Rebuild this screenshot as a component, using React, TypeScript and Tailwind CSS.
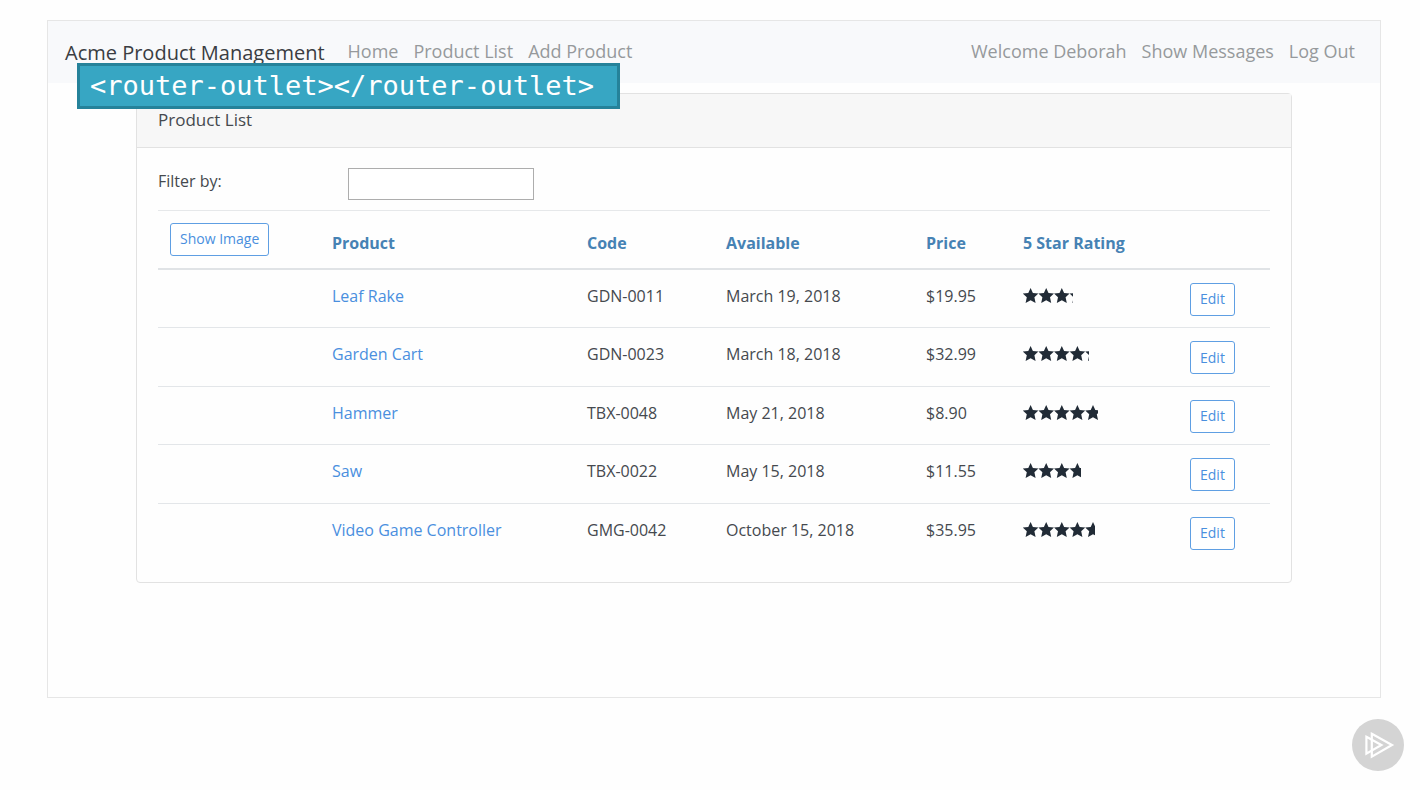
type Product = {
  name: string;
  code: string;
  available: string;
  price: string;
  rating: number;
};

const products: Product[] = [
  { name: "Leaf Rake", code: "GDN-0011", available: "March 19, 2018", price: "$19.95", rating: 3.2 },
  { name: "Garden Cart", code: "GDN-0023", available: "March 18, 2018", price: "$32.99", rating: 4.2 },
  { name: "Hammer", code: "TBX-0048", available: "May 21, 2018", price: "$8.90", rating: 4.8 },
  { name: "Saw", code: "TBX-0022", available: "May 15, 2018", price: "$11.55", rating: 3.7 },
  { name: "Video Game Controller", code: "GMG-0042", available: "October 15, 2018", price: "$35.95", rating: 4.6 },
];

const STAR_WIDTH = 78;

function Stars({ rating }: { rating: number }) {
  return (
    <div
      className="mt-1 h-4 overflow-hidden"
      role="img"
      aria-label={`${rating} of 5 stars`}
      style={{ width: Math.round((rating * STAR_WIDTH) / 5) }}
    >
      <svg width={STAR_WIDTH} height="16" viewBox="0 0 78 16" fill="#212b36">
        {[0, 1, 2, 3, 4].map((i) => (
          <path
            key={i}
            transform={`translate(${i * 15.6} 0)`}
            d="M7.6 0 L9.9 5 L15.4 5.5 L11.4 9.3 L12.6 15 L7.6 12.2 L2.6 15 L3.8 9.3 L-0.2 5.5 L5.3 5 Z"
          />
        ))}
      </svg>
    </div>
  );
}

function NavBar() {
  return (
    <nav className="flex h-[62px] items-center bg-[#f8f9fb] pr-[25px] pl-[17px]">
      <a href="#" className="mr-[23px] pt-0.5 text-[20px] leading-[30px] text-[#3a3d42]">
        Acme Product Management
      </a>
      <div className="flex flex-1 gap-[15px] pb-0.5 text-[18px] leading-[28px] text-[#96999c]">
        <a href="#home">Home</a>
        <a href="#products">Product List</a>
        <a href="#add">Add Product</a>
      </div>
      <div className="flex gap-[15px] pb-0.5 text-[18px] leading-[28px] text-[#96999c]">
        <span>Welcome Deborah</span>
        <a href="#messages">Show Messages</a>
        <a href="#logout">Log Out</a>
      </div>
    </nav>
  );
}

function OutlineButton({ children }: { children: string }) {
  return (
    <button
      type="button"
      className="h-[33px] rounded-[3px] border border-[#5f9fe3] bg-white px-[9px] text-[14px] leading-[20px] whitespace-nowrap text-[#4a8fde]"
    >
      {children}
    </button>
  );
}

function ProductTable() {
  return (
    <table className="h-[351px] w-full table-fixed border-collapse text-left text-[16px] leading-[24px]">
      <colgroup>
        <col className="w-[162px]" />
        <col className="w-[255px]" />
        <col className="w-[139px]" />
        <col className="w-[200px]" />
        <col className="w-[97px]" />
        <col className="w-[167px]" />
        <col />
      </colgroup>
      <thead>
        <tr className="h-[58px] border-t border-b-2 border-t-[#e6e8ea] border-b-[#e0e3e6] text-[#4682b4]">
          <th className="px-3 align-middle font-normal">
            <OutlineButton>Show Image</OutlineButton>
          </th>
          <th className="px-3 pt-2 font-bold">Product</th>
          <th className="px-3 pt-2 font-bold">Code</th>
          <th className="px-3 pt-2 font-bold">Available</th>
          <th className="px-3 pt-2 font-bold">Price</th>
          <th className="px-3 pt-2 font-bold">5 Star Rating</th>
          <th />
        </tr>
      </thead>
      <tbody>
        {products.map((p) => (
          <tr key={p.code} className="border-b border-[#e3e6e9] align-top last:border-b-0">
            <td />
            <td className="px-3 pt-[14px]">
              <a href={`#${p.code}`} className="text-[#4a8fde]">
                {p.name}
              </a>
            </td>
            <td className="px-3 pt-[14px]">{p.code}</td>
            <td className="px-3 pt-[14px]">{p.available}</td>
            <td className="px-3 pt-[14px]">{p.price}</td>
            <td className="px-3 pt-[14px]">
              <Stars rating={p.rating} />
            </td>
            <td className="px-3 pt-[13px]">
              <OutlineButton>Edit</OutlineButton>
            </td>
          </tr>
        ))}
      </tbody>
    </table>
  );
}

function PlayBadge() {
  return (
    <svg width="52" height="52" viewBox="0 0 52 52" aria-hidden="true">
      <circle cx="26" cy="26" r="26" fill="#d4d4d4" />
      <g fill="none" stroke="#fff" strokeWidth="2.2">
        <path d="M19.8 14.8 L40 26 L19.8 37.6 Z" />
        <path d="M14.4 17.8 L29.4 26 L14.4 34.6 Z" />
      </g>
    </svg>
  );
}

export default function App() {
  return (
    <div className="min-h-screen bg-[#fefefe] pt-5 font-['Open_Sans','Noto_Sans',sans-serif] text-[#45494e]">
      <div className="relative mr-[39px] ml-[47px] min-h-[678px] border border-[#e6e6e6]">
        <NavBar />
        <main className="mx-[88px] mt-[10px] rounded border border-[#e2e2e2]">
          <h1 className="border-b border-[#e2e2e2] bg-[#f7f7f7] px-[21px] pt-[13px] pb-[15px] text-[17px] leading-[25px]">
            Product List
          </h1>
          <div className="px-[21px] pt-5 pb-[21px]">
            <div className="mb-[10px] flex">
              <label htmlFor="filter" className="w-[190px] text-[16px] leading-[26px]">
                Filter by:
              </label>
              <input id="filter" type="text" className="h-8 w-[186px] border border-[#adadad] bg-white px-2" />
            </div>
            <ProductTable />
          </div>
        </main>
        <div className="absolute top-[42px] left-[29px] border-[3px] border-[#25829a] bg-[#37a6c3] pr-[23px] pl-[10px] font-['DejaVu_Sans_Mono',monospace] text-[27px] leading-[40px] whitespace-nowrap text-white">
          {"<router-outlet></router-outlet>"}
        </div>
      </div>
      <footer className="flex justify-end pt-[21px] pr-4">
        <PlayBadge />
      </footer>
    </div>
  );
}
